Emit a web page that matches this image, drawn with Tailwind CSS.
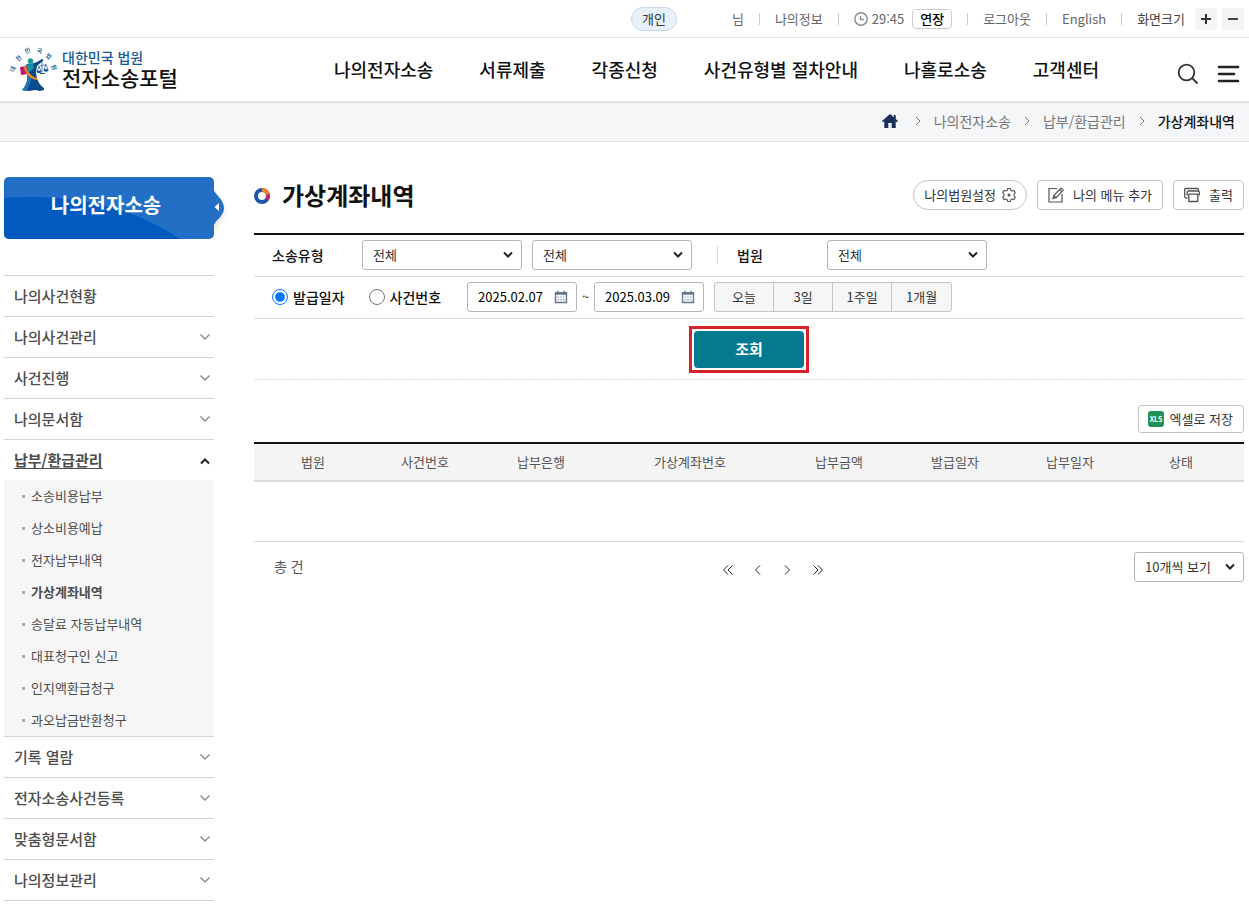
<!DOCTYPE html>
<html lang="ko">
<head>
<meta charset="utf-8">
<meta name="viewport" content="width=device-width, initial-scale=1">
<title>가상계좌내역 - 전자소송포털</title>
<script src="https://cdn.jsdelivr.net/npm/@tailwindcss/browser@4"></script>
</head>
<body class="bg-white font-['Noto_Sans_CJK_KR',sans-serif] text-[13px] leading-5 text-[#333]">

<!-- Shared icon shapes -->
<svg class="hidden" aria-hidden="true">
  <symbol id="select-arrow" viewBox="0 0 12 8"><path d="M2 1.500 6 5.500 10 1.500" fill="none" stroke="#222" stroke-width="2"/></symbol>
  <symbol id="chevron-down" viewBox="0 0 12 8"><path d="M1.500 1.500 6 6 10.500 1.500" fill="none" stroke="#8a8a8a" stroke-width="1.400"/></symbol>
  <symbol id="crumb" viewBox="0 0 6 10"><path d="M1 1 5 5 1 9" fill="none" stroke="#777" stroke-width="1"/></symbol>
  <symbol id="calendar" viewBox="0 0 14 14">
    <path d="M1.500 3h11v9.500h-11z" fill="none" stroke="#64748b" stroke-width="1.400"/>
    <path d="M1 2.200h12v2.600H1zM3.200.7h1.400v2H3.200zM9.400.7h1.400v2H9.400z" fill="#64748b"/>
    <path d="M3.500 7h1.200M6.400 7h1.200M9.300 7h1.200M3.500 9.800h1.200M6.400 9.800h1.200M9.300 9.800h1.200" stroke="#64748b" stroke-width="1.200"/>
  </symbol>
</svg>

<header>
  <div class="flex h-[38px] items-center justify-end gap-[15px] border-b border-[#e3e4e8] pr-[5px] text-[#666]">
    <span class="mr-10 flex h-6 items-center rounded-full border border-[#c9d8e8] bg-[#e8f1fa] px-[10px] text-[#333]">개인</span>
    <span>님</span>
    <span class="h-3 w-px bg-[#ccc]"></span>
    <a href="#">나의정보</a>
    <span class="h-3 w-px bg-[#ccc]"></span>
    <div class="flex items-center gap-1">
      <svg class="size-[14px]" viewBox="0 0 14 14" fill="none" stroke="#8a8f99" stroke-width="1.500"><circle cx="7" cy="7" r="6.200"/><path d="M6.500 4v3.500H10"/></svg>
      <span>29:45</span>
      <button type="button" class="ml-1 flex h-5 items-center rounded border border-[#ccc] px-[7px] font-medium text-black">연장</button>
    </div>
    <span class="h-3 w-px bg-[#ccc]"></span>
    <a href="#">로그아웃</a>
    <span class="h-3 w-px bg-[#ccc]"></span>
    <a href="#">English</a>
    <span class="h-3 w-px bg-[#ccc]"></span>
    <div class="flex items-center gap-[10px] text-[#444]">
      <span>화면크기</span>
      <div class="flex gap-[5px]">
        <button type="button" aria-label="확대" class="grid size-[22px] place-items-center bg-[#f5f5f5]"><svg class="size-[10px]" viewBox="0 0 10 10" stroke="#333" stroke-width="2"><path d="M0 5h10M5 0v10"/></svg></button>
        <button type="button" aria-label="축소" class="grid size-[22px] place-items-center bg-[#f5f5f5]"><svg class="size-[10px]" viewBox="0 0 10 10" stroke="#444" stroke-width="2"><path d="M0 5h10"/></svg></button>
      </div>
    </div>
  </div>

  <div class="flex h-[65px] items-center border-b-2 border-[#e1e4e9] pr-[9px] pl-[6px]">
    <a href="#" class="flex w-[328px] shrink-0 items-center">
      <svg class="h-[52px] w-14" viewBox="0 0 56 52" aria-hidden="true">
        <g fill="#2a6f9f" font-size="6" font-weight="700" text-anchor="middle">
          <text transform="translate(9 26) rotate(-70)">대</text>
          <text transform="translate(14 16) rotate(-40)">한</text>
          <text transform="translate(22 9) rotate(-12)">민</text>
          <text transform="translate(33 9) rotate(12)">국</text>
          <text transform="translate(41 14) rotate(40)">법</text>
          <text transform="translate(46 24) rotate(70)">원</text>
        </g>
        <path d="M21 20C24 19 27 20 31 18L36 15 37.500 16.500 31 22 30 27C30 34 33 41 38 44L38 46 34 47 29 46 23 47 16 46C20 42 22 36 21 30L17 30Z" fill="#0d4a8c"/>
        <path d="M20 20.500 27 20 28 24 23 28 18 25Z" fill="#1796a6"/>
        <path d="M25 34C25 39 22 44 20 47L16 46C20 42 22 37 21.500 32Z" fill="#1a78b4"/>
        <circle cx="24.500" cy="17" r="2.700" fill="#159a8e"/>
        <path d="M14 23 21 22 22 30 15 31Z" fill="#c3156b"/>
        <path d="M20 22C21 28 25 32 31 34L31 36C24 35 19 30 18 23Z" fill="#ee8b27"/>
        <path d="M36 15v13.500M32.500 22.500 40 20.500M33 22.500 31 27h4zM40 20.500 38 25.500h4z" fill="none" stroke="#195493" stroke-width=".7"/>
        <path d="M30.500 27h5a2.500 2.200 0 0 1-5 0M37.500 25.500h5a2.500 2.200 0 0 1-5 0M34 29h5v1h-5z" fill="#195493"/>
      </svg>
      <span class="flex flex-col pb-[5px]">
        <span class="text-[14px] leading-5 font-medium text-[#175a93]">대한민국 법원</span>
        <span class="text-[21px] leading-5 font-medium text-[#111]">전자소송포털</span>
      </span>
    </a>
    <nav class="flex flex-1 gap-[46px] pb-0.5 text-[18px] leading-6 font-medium whitespace-nowrap text-[#111]">
      <a href="#">나의전자소송</a>
      <a href="#">서류제출</a>
      <a href="#">각종신청</a>
      <a href="#">사건유형별 절차안내</a>
      <a href="#">나홀로소송</a>
      <a href="#">고객센터</a>
    </nav>
    <div class="flex items-center gap-[18px] pt-2">
      <button type="button" aria-label="검색"><svg class="size-[22px]" viewBox="0 0 22 22" fill="none" stroke="#333" stroke-width="1.800"><circle cx="9.500" cy="9.500" r="7.800"/><path d="M15 15l5.500 5.500"/></svg></button>
      <button type="button" aria-label="전체메뉴"><svg class="h-[18px] w-[23px]" viewBox="0 0 23 18" stroke="#222" stroke-width="2.600" stroke-linecap="round"><path d="M2 2h19M2 9h15M2 16h19"/></svg></button>
    </div>
  </div>

  <nav aria-label="현재 위치" class="flex h-[39px] items-center justify-end gap-[13px] border-b border-[#e1e3e7] bg-[#f4f6f8] pr-[14px] pb-0.5 text-[14px] text-[#777]">
    <a href="#" aria-label="홈" class="mr-1"><svg class="h-[14px] w-4" viewBox="0 0 16 14" fill="#1b2f5b"><path d="M8 0 0 7l1 1.200 1.300-1V14H6.300V9h3.400v5h4V7.200l1.300 1L16 7l-2.300-2V1H11.800v2.300z"/></svg></a>
    <svg class="h-[10px] w-[6px]"><use href="#crumb"/></svg>
    <a href="#">나의전자소송</a>
    <svg class="h-[10px] w-[6px]"><use href="#crumb"/></svg>
    <a href="#">납부/환급관리</a>
    <svg class="h-[10px] w-[6px]"><use href="#crumb"/></svg>
    <a href="#" class="font-medium text-[#111]">가상계좌내역</a>
  </nav>
</header>

<div class="flex gap-10 pt-[35px] pr-[5px] pl-1">
  <aside class="w-[210px] shrink-0">
    <div class="relative mb-9 h-[62px]">
      <svg class="absolute top-2 left-[204px] h-[46px] w-6 drop-shadow-md" viewBox="0 0 24 46" aria-hidden="true"><path d="M0 3H5C6 9 16 14 16 23S6 35 5 43H0z" fill="#236fc6"/></svg>
      <div class="relative h-full overflow-hidden rounded-[5px] bg-[#236fc6]">
        <svg class="absolute inset-0 size-full" viewBox="0 0 210 62" preserveAspectRatio="none" aria-hidden="true"><path d="M0 21C60 17 120 25 176 62H0z" fill="#0259be"/></svg>
        <h2 class="relative pt-4 pr-1.5 text-center text-[20px] leading-6 font-bold text-white">나의전자소송</h2>
      </div>
      <svg class="absolute top-[26px] left-[210px] h-2 w-[5px]" viewBox="0 0 5 8" aria-hidden="true"><path d="M5 0v8L.5 4z" fill="#fff"/></svg>
    </div>
    <ul class="border-b border-[#d5d5d5] text-[15px] font-medium text-[#4d4d4d]">
      <li class="border-t border-[#d5d5d5]"><a href="#" class="flex h-10 items-center px-[10px]">나의사건현황</a></li>
      <li class="border-t border-[#d5d5d5]"><a href="#" class="flex h-10 items-center justify-between pr-[3px] pl-[10px]">나의사건관리<svg class="h-2 w-3"><use href="#chevron-down"/></svg></a></li>
      <li class="border-t border-[#d5d5d5]"><a href="#" class="flex h-10 items-center justify-between pr-[3px] pl-[10px]">사건진행<svg class="h-2 w-3"><use href="#chevron-down"/></svg></a></li>
      <li class="border-t border-[#d5d5d5]"><a href="#" class="flex h-10 items-center justify-between pr-[3px] pl-[10px]">나의문서함<svg class="h-2 w-3"><use href="#chevron-down"/></svg></a></li>
      <li class="border-t border-[#d5d5d5]">
        <a href="#" class="flex h-10 items-center justify-between pr-[3px] pl-[10px] font-bold"><span class="underline underline-offset-2">납부/환급관리</span><svg class="h-3 w-3" viewBox="0 0 12 12"><path d="M2 9.500 6 5.500 10 9.500" fill="none" stroke="#222" stroke-width="2"/></svg></a>
        <ul class="bg-[#f6f6f6] text-[13px] font-normal">
          <li><a href="#" class="flex h-8 items-center gap-[6px] pl-[18px]"><span class="size-[3px] bg-[#aaa]"></span>소송비용납부</a></li>
          <li><a href="#" class="flex h-8 items-center gap-[6px] pl-[18px]"><span class="size-[3px] bg-[#aaa]"></span>상소비용예납</a></li>
          <li><a href="#" class="flex h-8 items-center gap-[6px] pl-[18px]"><span class="size-[3px] bg-[#aaa]"></span>전자납부내역</a></li>
          <li><a href="#" class="flex h-8 items-center gap-[6px] pl-[18px] font-bold"><span class="size-[3px] bg-[#aaa]"></span>가상계좌내역</a></li>
          <li><a href="#" class="flex h-8 items-center gap-[6px] pl-[18px]"><span class="size-[3px] bg-[#aaa]"></span>송달료 자동납부내역</a></li>
          <li><a href="#" class="flex h-8 items-center gap-[6px] pl-[18px]"><span class="size-[3px] bg-[#aaa]"></span>대표청구인 신고</a></li>
          <li><a href="#" class="flex h-8 items-center gap-[6px] pl-[18px]"><span class="size-[3px] bg-[#aaa]"></span>인지액환급청구</a></li>
          <li><a href="#" class="flex h-8 items-center gap-[6px] pl-[18px]"><span class="size-[3px] bg-[#aaa]"></span>과오납금반환청구</a></li>
        </ul>
      </li>
      <li class="border-t border-[#d5d5d5]"><a href="#" class="flex h-10 items-center justify-between pr-[3px] pl-[10px]">기록 열람<svg class="h-2 w-3"><use href="#chevron-down"/></svg></a></li>
      <li class="border-t border-[#d5d5d5]"><a href="#" class="flex h-10 items-center justify-between pr-[3px] pl-[10px]">전자소송사건등록<svg class="h-2 w-3"><use href="#chevron-down"/></svg></a></li>
      <li class="border-t border-[#d5d5d5]"><a href="#" class="flex h-10 items-center justify-between pr-[3px] pl-[10px]">맞춤형문서함<svg class="h-2 w-3"><use href="#chevron-down"/></svg></a></li>
      <li class="border-t border-[#d5d5d5]"><a href="#" class="flex h-10 items-center justify-between pr-[3px] pl-[10px]">나의정보관리<svg class="h-2 w-3"><use href="#chevron-down"/></svg></a></li>
    </ul>
  </aside>

  <main class="min-w-0 flex-1">
    <div class="flex h-14 items-start justify-between pt-[3px]">
      <div class="flex h-8 items-center gap-3">
        <svg class="size-4" viewBox="0 0 16 16" fill="none" stroke-width="4" aria-hidden="true">
          <circle cx="8" cy="8" r="6" stroke="#1b56a8"/>
          <path d="M8 2A6 6 0 0 1 13.800 6.500" stroke="#ee8430"/>
          <path d="M13.800 6.500A6 6 0 0 1 13 11.300" stroke="#c02a62"/>
        </svg>
        <h1 class="pb-0.5 text-[24px] leading-8 font-bold text-[#111]">가상계좌내역</h1>
      </div>
      <div class="flex gap-[10px]">
        <button type="button" class="flex h-[30px] items-center gap-[5px] rounded-full border border-[#c4c4c4] pr-[9px] pl-[10px]">나의법원설정
          <svg class="size-4" viewBox="0 0 16 16" fill="none" stroke="#555" stroke-width="1.100" stroke-linejoin="round"><path d="M6.700 1.500h2.600l.5 1.800 1.300.7 1.800-.6 1.400 2.200-1.300 1.500v1.800l1.300 1.500-1.400 2.200-1.800-.6-1.300.7-.5 1.800H6.700l-.5-1.800-1.300-.7-1.800.6-1.400-2.200L3 8.900V7.100L1.700 5.600l1.400-2.200 1.800.6 1.300-.7z"/><circle cx="8" cy="8" r="1" fill="#555"/></svg>
        </button>
        <button type="button" class="flex h-[30px] items-center gap-[9px] rounded border border-[#c4c4c4] px-[10px]">
          <svg class="size-4" viewBox="0 0 16 16" fill="none" stroke="#555" stroke-width="1.200"><path d="M9 1.500H1v13.500h13V7"/><path d="M5 11.500 5.800 8.500 13 1l2.300 2.200L8 10.600zM11.500 2.600l2.200 2.200M5.800 8.500 8 10.600"/></svg>
          나의 메뉴 추가
        </button>
        <button type="button" class="flex h-[30px] items-center gap-[9px] rounded border border-[#c4c4c4] px-[10px]">
          <svg class="size-4" viewBox="0 0 16 16" fill="none" stroke="#555" stroke-width="1.300" stroke-linejoin="round"><path d="M3.500 11H1.800A1.200 1.200 0 0 1 .7 9.800V2.700a1.200 1.200 0 0 1 1.100-1.200h11.500a1.200 1.200 0 0 1 1.200 1.200V4"/><path d="M3.200 8.500V5.200A1.200 1.200 0 0 1 4.400 4h9.700a1.200 1.200 0 0 1 1.200 1.200v3.300M4.800 7.200h9v7.300h-9z"/></svg>
          출력
        </button>
      </div>
    </div>

    <form>
      <div class="flex h-11 items-center border-t-2 border-b border-t-[#111] border-b-[#d9d9d9] pb-px pl-[18px]">
        <label for="type1" class="w-[90px] text-[14px] font-medium text-[#111]">소송유형</label>
        <div class="grid w-40 items-center">
          <select id="type1" class="col-start-1 row-start-1 h-[30px] w-full appearance-none rounded-[3px] border border-[#b5b5b5] bg-white pl-[10px]"><option>전체</option></select>
          <svg class="pointer-events-none col-start-1 row-start-1 mr-2 h-2 w-3 justify-self-end"><use href="#select-arrow"/></svg>
        </div>
        <div class="ml-[10px] grid w-40 items-center">
          <select aria-label="소송유형 상세" class="col-start-1 row-start-1 h-[30px] w-full appearance-none rounded-[3px] border border-[#b5b5b5] bg-white pl-[10px]"><option>전체</option></select>
          <svg class="pointer-events-none col-start-1 row-start-1 mr-2 h-2 w-3 justify-self-end"><use href="#select-arrow"/></svg>
        </div>
        <span class="ml-[25px] h-[18px] w-px bg-[#d9d9d9]"></span>
        <label for="court" class="ml-[19px] w-[90px] text-[14px] font-medium text-[#111]">법원</label>
        <div class="grid w-40 items-center">
          <select id="court" class="col-start-1 row-start-1 h-[30px] w-full appearance-none rounded-[3px] border border-[#b5b5b5] bg-white pl-[10px]"><option>전체</option></select>
          <svg class="pointer-events-none col-start-1 row-start-1 mr-2 h-2 w-3 justify-self-end"><use href="#select-arrow"/></svg>
        </div>
      </div>

      <div class="flex h-[42px] items-center border-b border-[#d9d9d9] pb-px pl-[18px]">
        <label class="flex items-center gap-[5px] text-[14px] font-medium text-[#111]"><input type="radio" name="basis" checked class="size-4">발급일자</label>
        <label class="ml-6 flex items-center gap-[5px] text-[14px] font-medium text-[#111]"><input type="radio" name="basis" class="size-4">사건번호</label>
        <div class="ml-[26px] flex h-[30px] w-[110px] items-center justify-between rounded-[3px] border border-[#b5b5b5] pr-[8px] pl-[10px]">
          <input type="text" aria-label="시작일" value="2025.02.07" class="w-[70px] text-black">
          <button type="button" aria-label="시작일 선택"><svg class="size-[14px]"><use href="#calendar"/></svg></button>
        </div>
        <span class="w-[17px] text-center">~</span>
        <div class="flex h-[30px] w-[110px] items-center justify-between rounded-[3px] border border-[#b5b5b5] pr-[8px] pl-[10px]">
          <input type="text" aria-label="종료일" value="2025.03.09" class="w-[70px] text-black">
          <button type="button" aria-label="종료일 선택"><svg class="size-[14px]"><use href="#calendar"/></svg></button>
        </div>
        <div class="ml-[10px] flex h-[30px] divide-x divide-[#c4c4c4] overflow-hidden rounded-[3px] border border-[#c4c4c4] bg-[#f6f6f6]">
          <button type="button" class="w-[59px]">오늘</button>
          <button type="button" class="w-[59px]">3일</button>
          <button type="button" class="w-[59px]">1주일</button>
          <button type="button" class="w-[59px]">1개월</button>
        </div>
      </div>

      <div class="flex h-[61px] justify-center bg-[linear-gradient(to_right,#b0b0b0_1px,transparent_1px)] bg-[length:3px_1px] bg-bottom bg-repeat-x pt-[7px]">
        <div class="h-[47px] border-[3px] border-[#d9232b] p-[2px]">
          <button type="button" class="h-full w-[110px] rounded bg-[#047a91] pb-0.5 text-[15px] font-bold text-white">조회</button>
        </div>
      </div>
    </form>

    <div class="flex justify-end pt-[25px] pb-[9px]">
      <button type="button" class="flex h-7 items-center gap-[6px] rounded-[3px] border border-[#c4c4c4] pr-[10px] pl-[9px]">
        <svg class="size-4" viewBox="0 0 16 16"><rect width="16" height="16" rx="3" fill="#1f9254"/><text x="8" y="11" font-size="7" font-weight="700" fill="#fff" text-anchor="middle">XLS</text></svg>
        엑셀로 저장
      </button>
    </div>

    <table class="w-full table-fixed border-collapse">
      <colgroup>
        <col class="w-[118px]"><col class="w-[106px]"><col class="w-[126px]"><col class="w-[172px]"><col class="w-[126px]"><col class="w-[106px]"><col class="w-[124px]"><col class="w-[112px]">
      </colgroup>
      <thead>
        <tr class="h-[38px] border-t-2 border-b-2 border-t-[#111] border-b-[#dadada] bg-[#f4f4f4] text-[#555]">
          <th class="font-normal">법원</th><th class="font-normal">사건번호</th><th class="font-normal">납부은행</th><th class="font-normal">가상계좌번호</th><th class="font-normal">납부금액</th><th class="font-normal">발급일자</th><th class="font-normal">납부일자</th><th class="pr-[14px] font-normal">상태</th>
        </tr>
      </thead>
      <tbody>
        <tr class="h-[60px] border-b border-[#d9d9d9]"><td colspan="8"></td></tr>
      </tbody>
    </table>

    <div class="grid grid-cols-[1fr_auto_1fr] items-center pt-[10px]">
      <p class="pb-0.5 pl-5 text-[14px] text-[#555]">총 건</p>
      <nav aria-label="페이지" class="ml-12 flex items-center gap-[20px] pt-1.5">
        <a href="#" aria-label="처음"><svg class="h-[10px] w-[10px]" viewBox="0 0 10 10" fill="none" stroke="#222"><path d="M5 .5.5 5 5 9.500M9.500.5 5 5l4.500 4.500"/></svg></a>
        <a href="#" aria-label="이전"><svg class="h-[10px] w-[10px]" viewBox="0 0 10 10" fill="none" stroke="#222"><path d="M7 .5 2.500 5 7 9.500"/></svg></a>
        <a href="#" aria-label="다음"><svg class="h-[10px] w-[10px]" viewBox="0 0 10 10" fill="none" stroke="#222"><path d="M2 .5 6.500 5 2 9.500"/></svg></a>
        <a href="#" aria-label="마지막"><svg class="h-[10px] w-[10px]" viewBox="0 0 10 10" fill="none" stroke="#222"><path d="M.5.5 5 5 .5 9.500M5 .5 9.500 5 5 9.500"/></svg></a>
      </nav>
      <div class="grid w-[110px] items-center justify-self-end">
        <select aria-label="페이지당 개수" class="col-start-1 row-start-1 h-[30px] w-full appearance-none rounded-[3px] border border-[#b5b5b5] bg-white pl-[10px]"><option>10개씩 보기</option></select>
        <svg class="pointer-events-none col-start-1 row-start-1 mr-2 h-2 w-3 justify-self-end"><use href="#select-arrow"/></svg>
      </div>
    </div>
  </main>
</div>
</body>
</html>
